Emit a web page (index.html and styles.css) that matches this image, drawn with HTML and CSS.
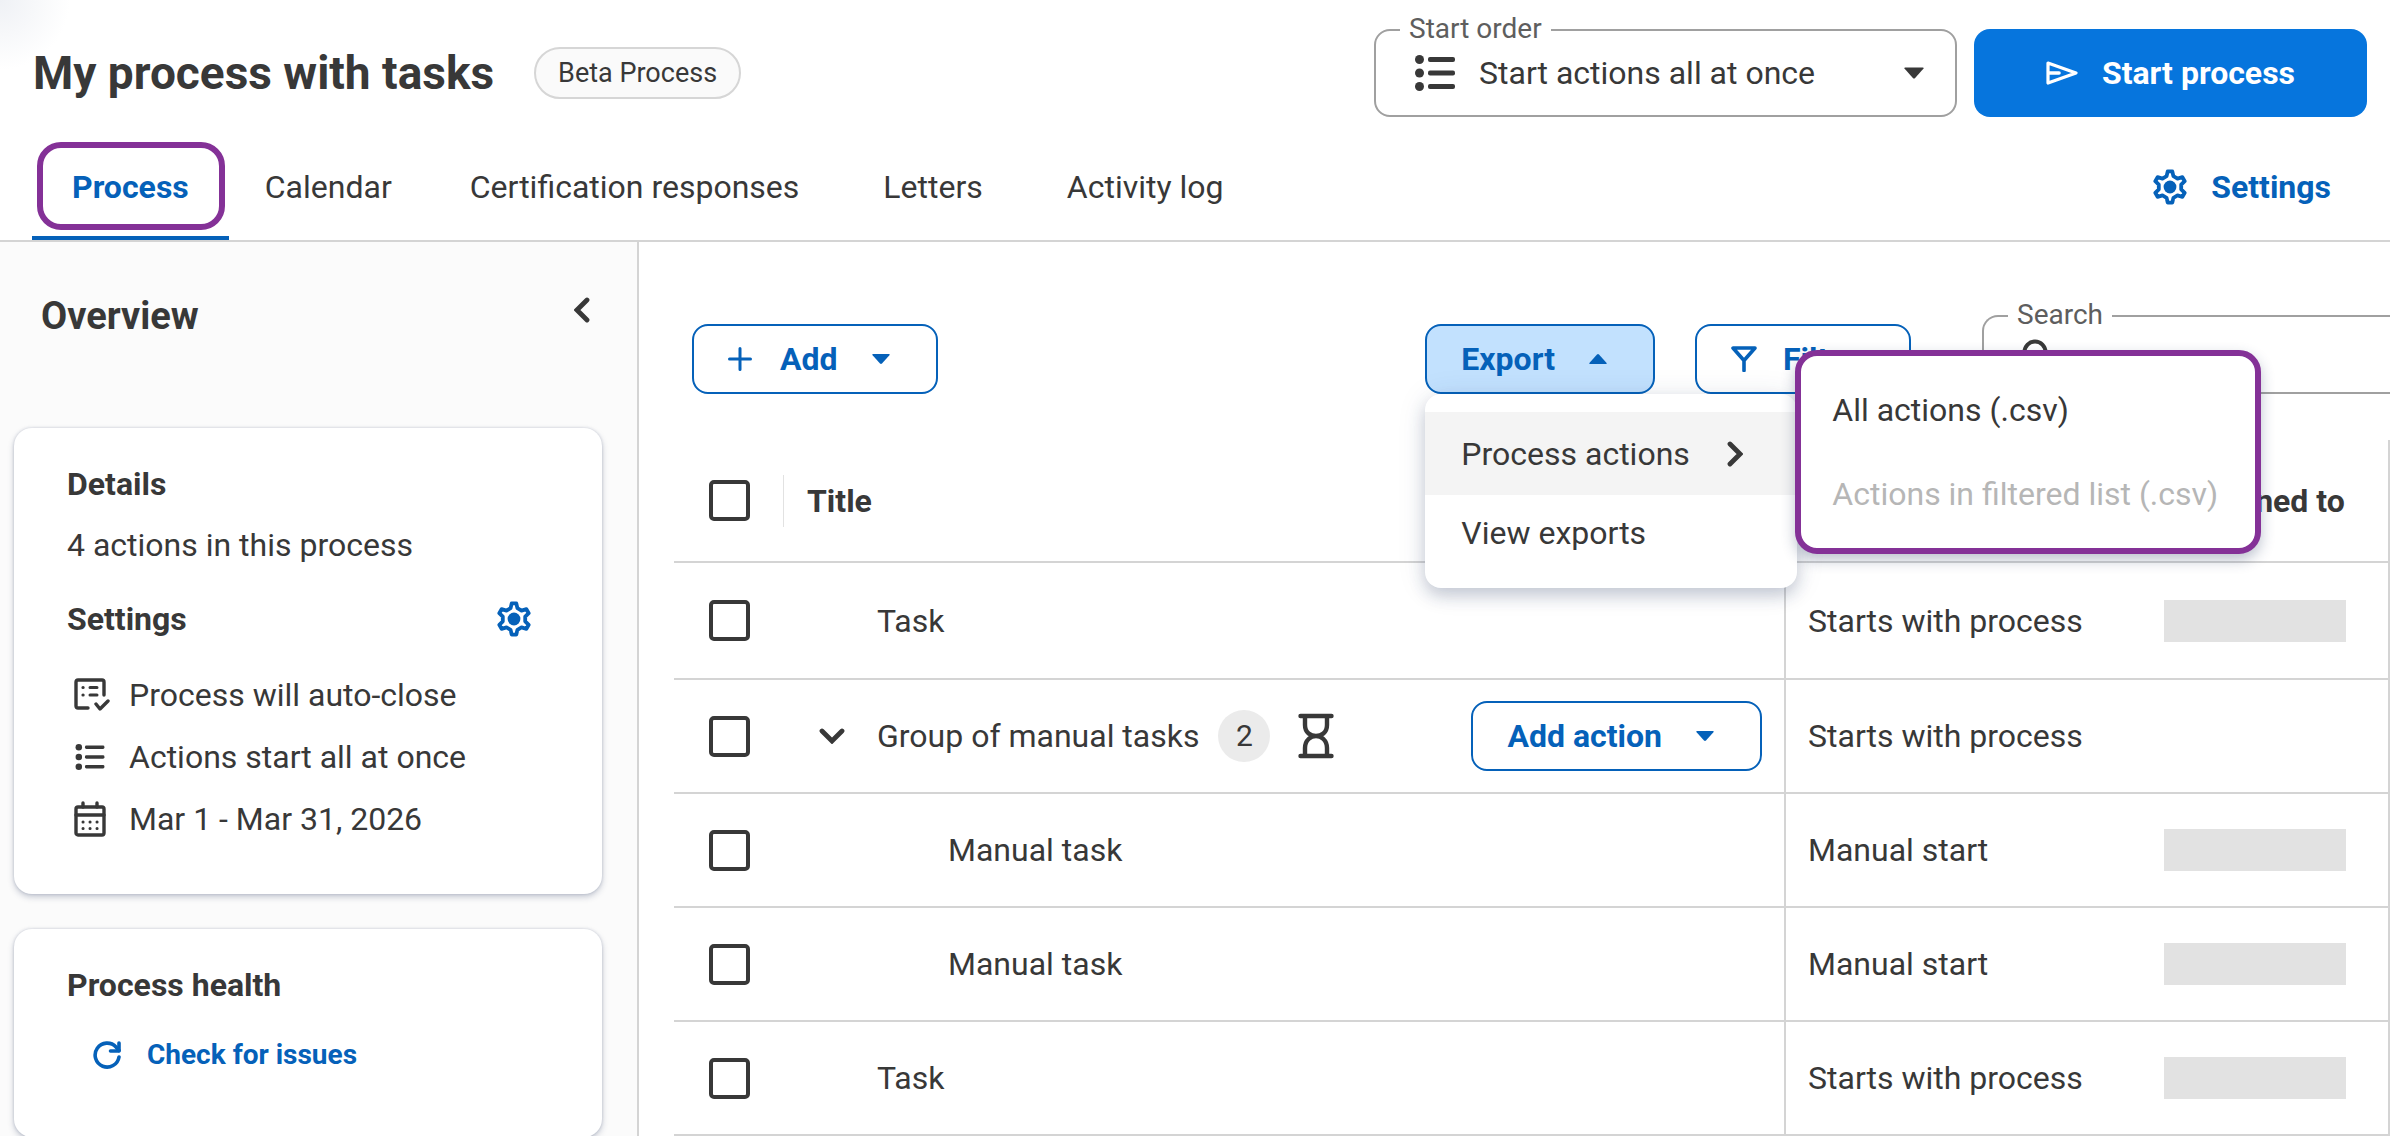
FILE: index.html
```html
<!DOCTYPE html>
<html lang="en">
<head>
    <meta charset="UTF-8">
    <title>My process with tasks</title>
    <link rel="stylesheet" href="styles.css">
</head>
<body>
<!-- shared icons -->
<svg class="sprite" aria-hidden="true">
    <symbol id="icon-gear" viewBox="-17 -18 34 36">
        <path d="M-2.3-15.6H2.3L3.4-10.8L7.5-8.4L12.4-9.8L14.7-5.8L11.2-2.3V2.3L14.7 5.8L12.4 9.8L7.5 8.4L3.4 10.8L2.3 15.6H-2.3L-3.4 10.8L-7.5 8.4L-12.4 9.8L-14.7 5.8L-11.2 2.3V-2.3L-14.7-5.8L-12.4-9.8L-7.5-8.4L-3.4-10.8Z" fill="none" stroke="currentColor" stroke-width="3.8" stroke-linejoin="round"/>
        <circle r="6.4" fill="currentColor"/>
    </symbol>
    <symbol id="icon-list" viewBox="0 0 40 36">
        <g fill="currentColor">
            <circle cx="4.5" cy="4.5" r="4.5"/><circle cx="4.5" cy="18" r="4.5"/><circle cx="4.5" cy="31.5" r="4.5"/>
            <rect x="13" y="2" width="27" height="5" rx="2"/><rect x="13" y="15.5" width="27" height="5" rx="2"/><rect x="13" y="29" width="27" height="5" rx="2"/>
        </g>
    </symbol>
    <symbol id="icon-caret" viewBox="0 0 18 10">
        <path d="M1 0H17Q18.4 0 17.4 1.2L10 9.5Q9 10.4 8 9.5L.6 1.2Q-.4 0 1 0Z" fill="currentColor"/>
    </symbol>
    <symbol id="icon-chevron" viewBox="0 0 16 26">
        <path d="M3 3L13 13L3 23" fill="none" stroke="currentColor" stroke-width="4.8" stroke-linecap="round" stroke-linejoin="miter"/>
    </symbol>
</svg>

<div class="page">
    <header class="header">
        <div class="header-top">
            <h1>My process with tasks</h1>
            <span class="pill">Beta Process</span>
            <div class="field start-order">
                <label for="start-order">Start order</label>
                <svg class="icon-list-lg"><use href="#icon-list"/></svg>
                <select id="start-order">
                    <option>Start actions all at once</option>
                </select>
                <svg class="caret caret-lg"><use href="#icon-caret"/></svg>
            </div>
            <button type="button" class="btn-primary">
                <svg width="32" height="24" viewBox="0 0 32 24"><path d="M2 2L30 12L2 22Z" fill="none" stroke="currentColor" stroke-width="3.2" stroke-linejoin="round"/><path d="M3 12H13" stroke="currentColor" stroke-width="3.6" stroke-linecap="round"/></svg>
                Start process
            </button>
        </div>
        <nav class="tabs">
            <a href="#process" class="tab active">Process</a>
            <a href="#calendar" class="tab">Calendar</a>
            <a href="#certification" class="tab">Certification responses</a>
            <a href="#letters" class="tab">Letters</a>
            <a href="#activity" class="tab">Activity log</a>
            <a href="#settings" class="settings-link">
                <svg class="gear"><use href="#icon-gear"/></svg>
                Settings
            </a>
        </nav>
    </header>

    <div class="layout">
        <aside class="sidebar">
            <div class="sidebar-head">
                <h2>Overview</h2>
                <button type="button" class="btn-icon" aria-label="Collapse overview"><svg class="chevron left"><use href="#icon-chevron"/></svg></button>
            </div>
            <section class="card">
                <h3>Details</h3>
                <p class="summary">4 actions in this process</p>
                <div class="card-row">
                    <h3>Settings</h3>
                    <button type="button" class="btn-icon blue" aria-label="Edit settings"><svg class="gear"><use href="#icon-gear"/></svg></button>
                </div>
                <ul class="facts">
                    <li>
                        <svg width="36" height="34" viewBox="0 0 36 34" fill="none" stroke="currentColor" stroke-width="3.4" stroke-linecap="round" stroke-linejoin="round"><path d="M14 30H4Q2 30 2 28V4Q2 2 4 2H28Q30 2 30 4V17"/><path d="M9 9.5h.1M9 17h.1" stroke-width="3.2"/><path d="M16 9.5h7M16 17h7" stroke-width="3"/><path d="M22 26L26 31L34 23"/></svg>
                        Process will auto-close
                    </li>
                    <li>
                        <svg width="32" height="26"><use href="#icon-list"/></svg>
                        Actions start all at once
                    </li>
                    <li>
                        <svg width="32" height="36" viewBox="0 0 32 36" fill="none" stroke="currentColor" stroke-width="3.4" stroke-linecap="round" stroke-linejoin="round"><rect x="2" y="6" width="28" height="28" rx="2"/><path d="M2 14H30M9 2V6M23 2V6"/><path d="M9 21h.1M16 21h.1M23 21h.1M9 27.500h.1M16 27.500h.1M23 27.500h.1" stroke-width="3"/></svg>
                        Mar 1 - Mar 31, 2026
                    </li>
                </ul>
            </section>
            <section class="card health">
                <h3>Process health</h3>
                <button type="button" class="btn-check">
                    <svg width="28" height="28" viewBox="0 0 28 28" fill="none" stroke="currentColor" stroke-width="3.6" stroke-linecap="round" stroke-linejoin="round"><path d="M26 16A12 12 0 1 1 23 6L26 9.500"/><path d="M26 2V10H17.500"/></svg>
                    Check for issues
                </button>
            </section>
        </aside>

        <main class="main">
            <div class="toolbar">
                <button type="button" class="btn">
                    <svg class="plus" width="24" height="24" viewBox="0 0 24 24"><path d="M12 1.500V22.500M1.500 12H22.500" stroke="currentColor" stroke-width="3" stroke-linecap="round"/></svg>
                    Add
                    <svg class="caret"><use href="#icon-caret"/></svg>
                </button>
                <div class="toolbar-right">
                    <div class="dropdown">
                        <button type="button" class="btn open" aria-expanded="true">
                            Export
                            <svg class="caret up"><use href="#icon-caret"/></svg>
                        </button>
                        <div class="menu">
                            <button type="button" class="menu-item hover">
                                Process actions
                                <svg class="chevron"><use href="#icon-chevron"/></svg>
                            </button>
                            <button type="button" class="menu-item">View exports</button>
                            <div class="submenu">
                                <button type="button" class="menu-item">All actions (.csv)</button>
                                <button type="button" class="menu-item" disabled>Actions in filtered list (.csv)</button>
                            </div>
                        </div>
                    </div>
                    <button type="button" class="btn filter">
                        <svg width="26" height="26" viewBox="0 0 26 26"><path d="M2 2H24L13 14.500ZM13 14V24.500" fill="none" stroke="currentColor" stroke-width="3.6" stroke-linejoin="round" stroke-linecap="round"/></svg>
                        Filter
                    </button>
                    <div class="field search">
                        <label for="search">Search</label>
                        <svg width="32" height="32" viewBox="0 0 32 32"><circle cx="13" cy="13" r="10.500" fill="none" stroke="currentColor" stroke-width="4"/><path d="M21 21L30 30" stroke="currentColor" stroke-width="4" stroke-linecap="round"/></svg>
                        <input type="search" id="search">
                    </div>
                </div>
            </div>

            <table class="actions">
                <colgroup>
                    <col class="col-check">
                    <col>
                    <col class="col-start">
                    <col class="col-assigned">
                </colgroup>
                <thead>
                <tr>
                    <th class="check"><input type="checkbox" aria-label="Select all actions"></th>
                    <th class="title-head"><span>Title</span></th>
                    <th class="start"></th>
                    <th class="assigned">Assigned to</th>
                </tr>
                </thead>
                <tbody>
                <tr>
                    <td class="check"><input type="checkbox" aria-label="Select task"></td>
                    <td class="title">Task</td>
                    <td class="start">Starts with process</td>
                    <td class="assigned"><div class="redacted"></div></td>
                </tr>
                <tr>
                    <td class="check"><input type="checkbox" aria-label="Select group"></td>
                    <td class="group">
                        <div class="group-row">
                            <button type="button" class="btn-icon toggle" aria-label="Collapse group"><svg class="chevron down"><use href="#icon-chevron"/></svg></button>
                            <span>Group of manual tasks</span>
                            <span class="count">2</span>
                            <svg width="36" height="46" viewBox="0 0 36 46" fill="none" stroke="currentColor" stroke-width="4.4" stroke-linecap="round"><path d="M2.500 3H33.500M2.500 43H33.500"/><path d="M7 4V12C7 20 13 23 18 23C23 23 29 20 29 12V4M7 42V35C7 27 13 23 18 23C23 23 29 27 29 35V42"/></svg>
                            <button type="button" class="btn add-action">
                                Add action
                                <svg class="caret"><use href="#icon-caret"/></svg>
                            </button>
                        </div>
                    </td>
                    <td class="start">Starts with process</td>
                    <td class="assigned"></td>
                </tr>
                <tr>
                    <td class="check"><input type="checkbox" aria-label="Select manual task"></td>
                    <td class="title nested">Manual task</td>
                    <td class="start">Manual start</td>
                    <td class="assigned"><div class="redacted"></div></td>
                </tr>
                <tr>
                    <td class="check"><input type="checkbox" aria-label="Select manual task"></td>
                    <td class="title nested">Manual task</td>
                    <td class="start">Manual start</td>
                    <td class="assigned"><div class="redacted"></div></td>
                </tr>
                <tr>
                    <td class="check"><input type="checkbox" aria-label="Select task"></td>
                    <td class="title">Task</td>
                    <td class="start">Starts with process</td>
                    <td class="assigned"><div class="redacted"></div></td>
                </tr>
                </tbody>
            </table>
        </main>
    </div>
</div>
</body>
</html>
```
FILE: styles.css
```css
*{
    box-sizing: border-box;
}
body{
    margin: 0;
    font-family: Roboto, "Liberation Sans", sans-serif;
    font-size: 32px;
    line-height: 40px;
    color: #383838;
    background: #fff;
}
h1, h2, h3, p, ul{
    margin: 0;
    padding: 0;
}
h3{
    font-size: 32px;
    line-height: 40px;
}
button, input, select{
    font: inherit;
    color: inherit;
}
button{
    padding: 0;
    border: 0;
    background: none;
    cursor: pointer;
}
a{
    color: inherit;
    text-decoration: none;
}
svg{
    flex: none;
    display: block;
}
.sprite{
    position: absolute;
    width: 0;
    height: 0;
}
.page{
    display: flex;
    flex-direction: column;
    height: 100vh;
    overflow: hidden;
}

/* icons */
.gear{
    width: 34px;
    height: 36px;
}
.caret{
    width: 18px;
    height: 10px;
}
.caret-lg{
    width: 20px;
    height: 12px;
}
.up{
    transform: rotate(180deg);
}
.chevron{
    width: 16px;
    height: 26px;
}
.left{
    transform: rotate(180deg);
}
.down{
    transform: rotate(90deg);
}

/* header */
.header{
    flex: none;
    padding-top: 29px;
    border-bottom: 2px solid #d4d4d4;
    background: radial-gradient(circle at 0 0, #eff1f5 0, #fff 70px);
}
.header-top{
    display: flex;
    align-items: center;
    padding: 0 23px 0 33px;
}
h1{
    font-size: 46px;
    line-height: 56px;
}
.pill{
    margin-left: 40px;
    padding: 4px 22px;
    font-size: 27px;
    border: 2px solid #d6d6d6;
    border-radius: 26px;
    background: #fafafa;
}
.field{
    position: relative;
    display: flex;
    align-items: center;
    border: 2px solid #a0a0a0;
    border-radius: 16px;
}
.field label{
    position: absolute;
    top: -22px;
    left: 24px;
    padding: 0 9px;
    font-size: 28px;
    color: #5e5e5e;
    background: #fff;
}
.start-order{
    width: 583px;
    height: 88px;
    margin-left: auto;
}
.start-order select{
    width: 100%;
    height: 100%;
    padding: 0 80px 0 103px;
    border: 0;
    border-radius: 16px;
    background: none;
    appearance: none;
}
.icon-list-lg{
    position: absolute;
    left: 39px;
    width: 40px;
    height: 36px;
}
.caret-lg{
    position: absolute;
    right: 31px;
}
.btn-primary{
    display: flex;
    align-items: center;
    justify-content: center;
    gap: 24px;
    width: 393px;
    height: 88px;
    margin-left: 17px;
    font-weight: bold;
    color: #fff;
    background: #0675dd;
    border-radius: 16px;
}

/* tabs */
.tabs{
    display: flex;
    align-items: center;
    margin-top: 17px;
    padding: 0 59px 0 32px;
}
.tab{
    position: relative;
    padding: 33px 42px;
}
.tab.active{
    padding: 33px 40px 29px;
    border-bottom: 4px solid #0561b9;
    font-weight: bold;
    color: #0561b9;
}
.tab.active + .tab{
    padding: 33px 36px;
}
.tab.active::before{
    content: "";
    position: absolute;
    top: 8px;
    right: 4px;
    bottom: 6px;
    left: 5px;
    border: 6px solid #843197;
    border-radius: 24px;
}
.settings-link{
    display: flex;
    align-items: center;
    gap: 24px;
    margin-left: auto;
    font-weight: bold;
    color: #0561b9;
}

.layout{
    display: flex;
    flex: 1;
    min-height: 0;
}

/* overview */
.sidebar{
    flex: none;
    width: 639px;
    padding: 0 35px 0 14px;
    border-right: 2px solid #d4d4d4;
    background: #fbfbfb;
}
.sidebar-head{
    display: flex;
    justify-content: space-between;
    align-items: flex-start;
    height: 186px;
    padding: 50px 12px 0 27px;
}
h2{
    font-size: 38px;
    line-height: 48px;
}
.btn-icon{
    display: flex;
    align-items: center;
    justify-content: center;
    height: 36px;
}
.blue{
    color: #0561b9;
}
.card{
    padding: 36px 53px 44px;
    border-radius: 18px;
    background: #fff;
    box-shadow: 0 3px 6px rgba(38, 56, 96, .25), 0 0 3px rgba(38, 56, 96, .2);
}
.summary{
    margin-top: 21px;
}
.card-row{
    display: flex;
    align-items: center;
    justify-content: space-between;
    margin-top: 34px;
    padding-right: 18px;
}
.facts{
    margin-top: 25px;
    list-style: none;
}
.facts li{
    display: grid;
    grid-template-columns: 55px 1fr;
    align-items: center;
    height: 62px;
    padding-left: 7px;
}
.health{
    margin-top: 35px;
    padding-bottom: 62px;
}
.btn-check{
    display: flex;
    align-items: center;
    gap: 26px;
    margin: 30px 0 0 26px;
    font-size: 28px;
    font-weight: bold;
    color: #0561b9;
}

/* toolbar */
.main{
    flex: 1;
    min-width: 0;
    padding-left: 35px;
}
.toolbar{
    display: flex;
    align-items: flex-end;
    padding: 73px 0 0 18px;
}
.toolbar-right{
    display: flex;
    align-items: flex-end;
    gap: 40px;
    margin-left: auto;
}
.btn{
    display: flex;
    align-items: center;
    gap: 34px;
    height: 70px;
    padding: 0 46px 0 34px;
    font-weight: bold;
    color: #0561b9;
    border: 2px solid #0561b9;
    border-radius: 16px;
    background: #fff;
}
.plus{
    margin-right: -6px;
}
.dropdown{
    position: relative;
}
.btn.open{
    background: #c2e1fe;
}
.filter{
    width: 216px;
    gap: 26px;
}
.search{
    width: 408px;
    height: 79px;
    margin-left: 31px;
    padding-left: 38px;
    border-right: 0;
    border-radius: 16px 0 0 16px;
}
.search input{
    flex: 1;
    min-width: 0;
    height: 60px;
    padding: 0 16px;
    border: 0;
    background: none;
}

/* export menu */
.menu{
    position: absolute;
    top: 100%;
    left: 0;
    z-index: 10;
    width: 372px;
    padding: 18px 0;
    border-radius: 16px;
    background: #fff;
    box-shadow: 0 8px 16px rgba(38, 56, 96, .22), 0 2px 30px rgba(38, 56, 96, .1);
}
.menu-item{
    display: flex;
    align-items: center;
    justify-content: space-between;
    width: 100%;
    height: 75px;
    padding: 0 54px 0 36px;
    white-space: nowrap;
}
.menu-item.hover{
    height: 83px;
    background: #f4f4f4;
}
.submenu{
    position: absolute;
    top: -44px;
    left: 370px;
    width: 466px;
    padding: 12px 0;
    border: 6px solid #843197;
    border-radius: 22px;
    background: #fff;
    box-shadow: 0 6px 14px rgba(38, 56, 96, .3);
}
.submenu .menu-item{
    height: 84px;
    padding: 0 31px;
}
.menu-item:disabled{
    color: #b6b6b6;
}

/* actions table */
.actions{
    width: 100%;
    margin-top: 46px;
    border-spacing: 0;
    table-layout: fixed;
    border-right: 2px solid #d4d4d4;
}
.col-check{
    width: 109px;
}
.col-start{
    width: 362px;
}
.col-assigned{
    width: 242px;
}
.actions th, .actions td{
    height: 114px;
    padding: 0;
    text-align: left;
    border-bottom: 2px solid #d4d4d4;
}
.actions th{
    height: 123px;
}
.actions tbody tr:first-child td{
    height: 117px;
}
.actions .check{
    padding-left: 35px;
}
.check input{
    display: block;
    width: 41px;
    height: 41px;
    margin: 0;
    border: 4px solid #383838;
    border-radius: 5px;
    background: #fff;
    appearance: none;
}
.title-head span{
    display: block;
    padding: 6px 0 6px 23px;
    border-left: 1px solid #e2e2e2;
}
.actions td.title{
    padding-left: 94px;
}
.actions td.nested{
    padding-left: 165px;
}
.actions td.start{
    padding-left: 22px;
    border-left: 2px solid #d4d4d4;
}
.actions .assigned{
    padding-left: 18px;
}
.actions th.assigned{
    padding-left: 28px;
}
.redacted{
    width: 182px;
    height: 42px;
    background: #e2e2e2;
}
.group-row{
    display: flex;
    align-items: center;
    padding: 0 22px 0 36px;
}
.toggle{
    width: 26px;
    margin-right: 32px;
}
.count{
    width: 52px;
    margin: 0 28px 0 19px;
    font-size: 30px;
    line-height: 52px;
    text-align: center;
    border-radius: 50%;
    background: #ebebeb;
}
.add-action{
    margin-left: auto;
}
```
